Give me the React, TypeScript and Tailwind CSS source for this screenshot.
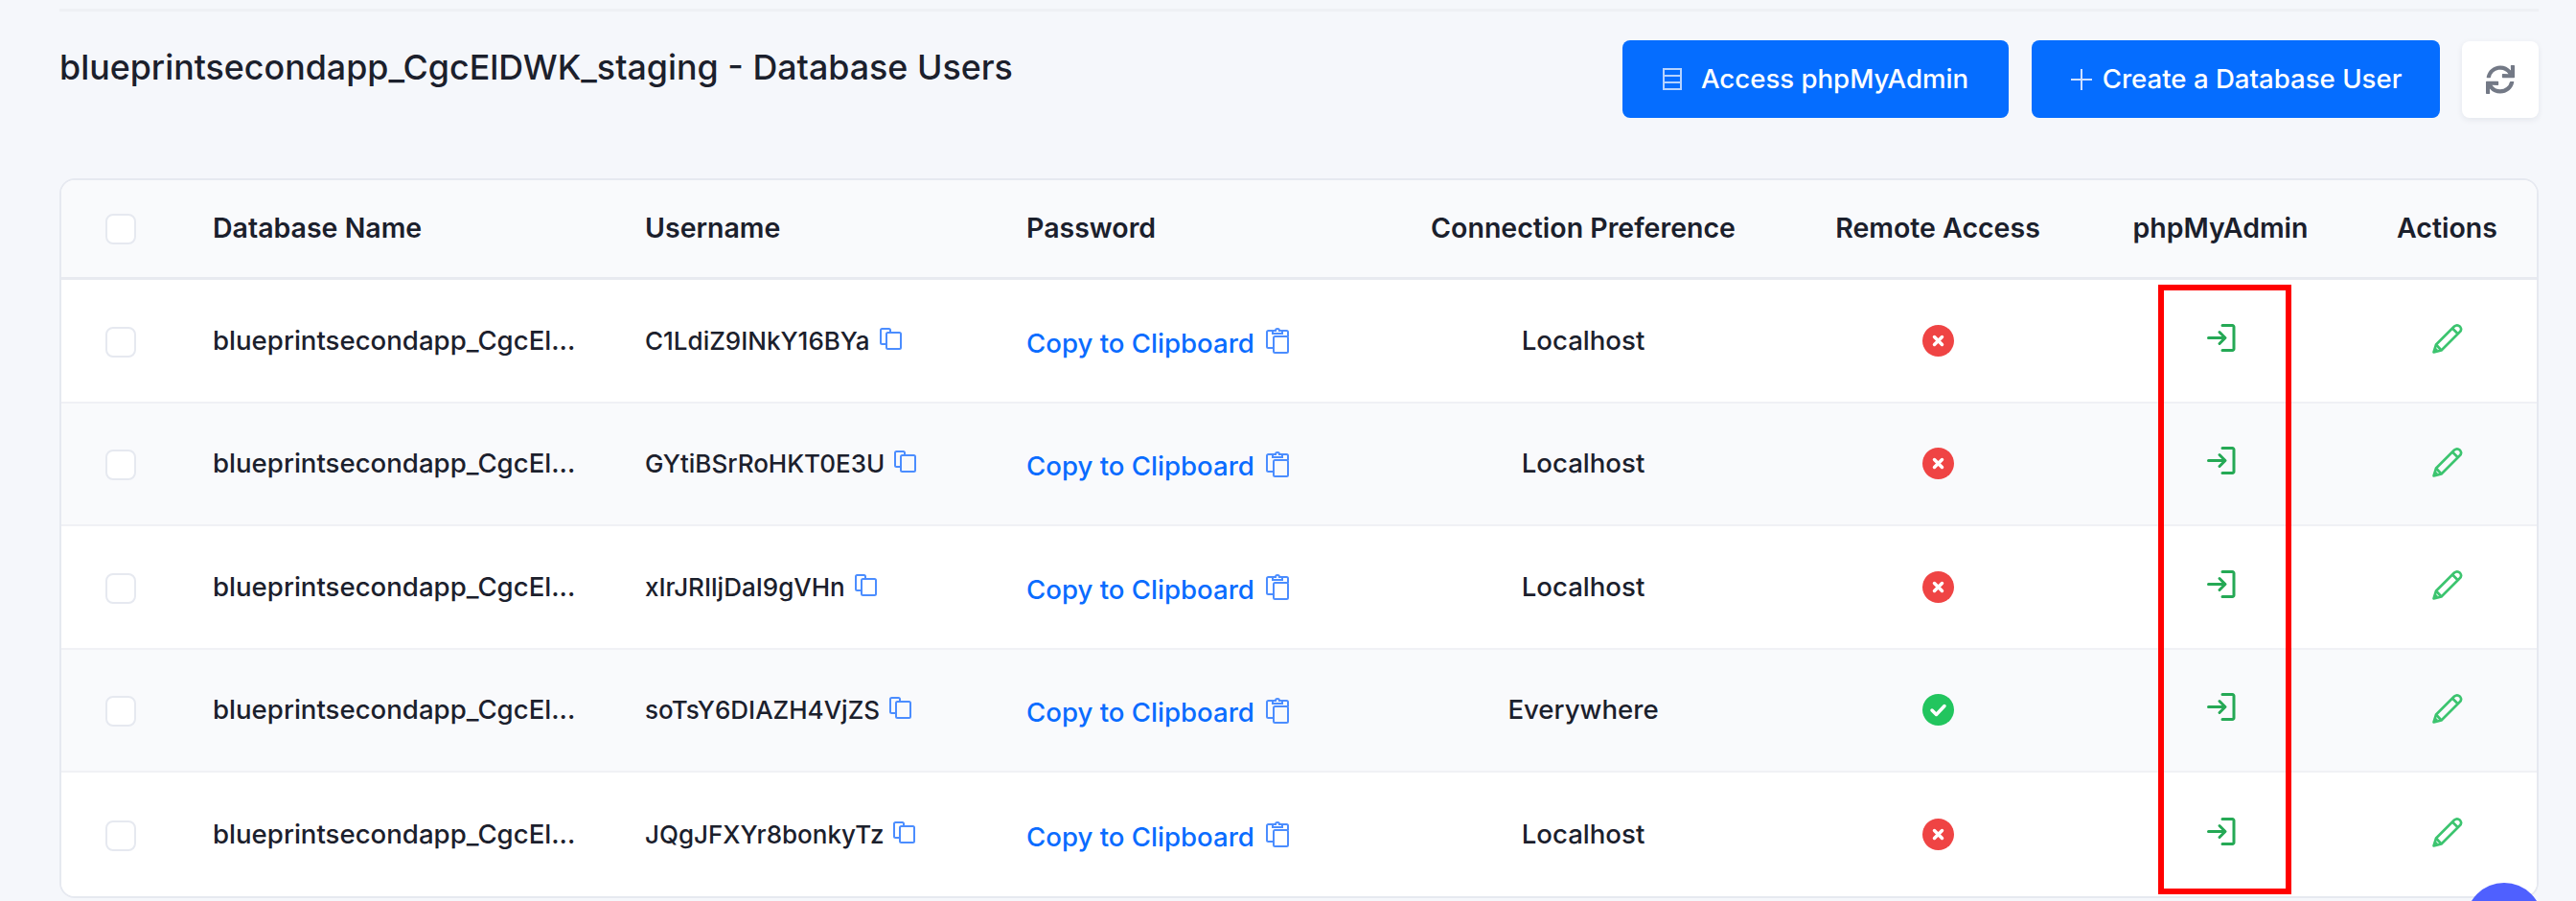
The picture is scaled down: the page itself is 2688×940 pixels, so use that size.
import { FaSync } from "react-icons/fa";

const rows = [
  { user: "C1LdiZ9INkY16BYa", pref: "Localhost", ok: false },
  { user: "GYtiBSrRoHKT0E3U", pref: "Localhost", ok: false },
  { user: "xIrJRIljDaI9gVHn", pref: "Localhost", ok: false },
  { user: "soTsY6DIAZH4VjZS", pref: "Everywhere", ok: true },
  { user: "JQgJFXYr8bonkyTz", pref: "Localhost", ok: false },
];

const grid = "grid grid-cols-[158px_451px_398px_359px_444px_296px_294px_1fr] items-center";

function Checkbox({ body }: { body?: boolean }) {
  return <div className={`ml-[46px] h-[32px] w-[32px] rounded-[8px] border-2 border-[#e6e9f0] bg-white ${body ? "mt-[3px]" : ""}`} />;
}

function CopyIcon() {
  return (
    <svg width="23" height="23" viewBox="0 0 23 23" fill="none" stroke="#4b8dff" strokeWidth="2" className="mb-[4px] shrink-0">
      <path d="M6 17H2.5a1.5 1.5 0 0 1-1.5-1.5v-13A1.5 1.5 0 0 1 2.5 1h7A1.5 1.5 0 0 1 11 2.5V5" />
      <rect x="7" y="5" width="15" height="17" rx="1.5" />
    </svg>
  );
}

function ClipIcon() {
  return (
    <svg width="24" height="28" viewBox="0 0 24 28" fill="none" stroke="#4b8dff" strokeWidth="2" className="mb-[6px] shrink-0">
      <path d="M7 4H2.500A1.500 1.500 0 0 0 1 5.500v15A1.500 1.500 0 0 0 2.500 22H8" />
      <path d="M17 4h4.500A1.500 1.500 0 0 1 23 5.500V10" />
      <path d="M7 7V4h3a2 2 0 0 1 4 0h3v3z" />
      <rect x="8" y="10" width="15" height="17" rx="1.500" />
    </svg>
  );
}

function LoginIcon() {
  return (
    <svg width="30" height="30" viewBox="0 0 30 30" fill="none" stroke="#25a955" strokeWidth="3" strokeLinecap="round" strokeLinejoin="round">
      <path d="M16 1.500h10.500a1.500 1.500 0 0 1 1.500 1.500v23a1.500 1.500 0 0 1-1.500 1.500H16" />
      <path d="M1.500 14.500h17M13 8.500l6 6-6 6" />
    </svg>
  );
}

function PencilIcon() {
  return (
    <svg width="32" height="32" viewBox="0 0 32 32" fill="none" stroke="#3cc46f" strokeWidth="2.600" strokeLinejoin="round">
      <path d="M1.500 30.500L4 22.500L23 3.500Q26 1 29 3.700Q31.500 7 28.500 9.500L9.500 28.500Z" />
      <path d="M21 5.500L27 11.500M4 22.500L9.500 28.500" />
      <path d="M2 30L5 27" strokeWidth="3" />
    </svg>
  );
}

function DbIcon() {
  return (
    <svg width="20" height="23" viewBox="0 0 20 23" fill="none" stroke="#b5d2ff" strokeWidth="2">
      <rect x="1" y="1" width="18" height="21" />
      <path d="M1 8h18M1 15h18" />
    </svg>
  );
}

function StatusIcon({ ok }: { ok: boolean }) {
  return (
    <svg width="33" height="33" viewBox="0 0 33 33">
      <circle cx="16.500" cy="16.500" r="16.500" fill={ok ? "#22c55e" : "#ef4444"} />
      {ok ? (
        <path d="M10 17l4.500 4.500L23 12.500" fill="none" stroke="#fff" strokeWidth="3.500" strokeLinecap="round" strokeLinejoin="round" />
      ) : (
        <path d="M12.500 12.500l8 8M20.500 12.500l-8 8" fill="none" stroke="#fff" strokeWidth="3.500" strokeLinecap="round" />
      )}
    </svg>
  );
}

export default function App() {
  return (
    <div className="relative h-[940px] w-[2688px] overflow-hidden bg-[#f5f7fb] font-['Inter',sans-serif] text-[#1b202c]">
      <div className="pl-[62px] pr-[39px] pt-[9px]">
        <div className="h-[3px] bg-[#eef0f4]" />
        <div className="mt-[30px] flex items-start justify-between">
          <h1 className="mt-[6px] text-[35.800px] font-medium leading-[44px]">blueprintsecondapp_CgcElDWK_staging - Database Users</h1>
          <div className="flex items-center">
            <button className="flex h-[81px] w-[403px] items-center justify-center gap-[20px] rounded-[8px] bg-[#056dff] text-[27.600px] font-medium text-white">
              <DbIcon />
              <span>Access phpMyAdmin</span>
            </button>
            <button className="ml-[24px] flex h-[81px] w-[426px] items-center justify-center gap-[10px] rounded-[8px] bg-[#056dff] text-[27.600px] font-medium text-white">
              <svg width="24" height="24" viewBox="0 0 24 24" fill="none" stroke="#cfe1ff" strokeWidth="2"><path d="M12 1v22M1 12h22" /></svg>
              <span>Create a Database User</span>
            </button>
            <button className="ml-[23px] flex h-[80px] w-[80px] items-center justify-center rounded-[8px] bg-white shadow-[0_2px_6px_rgba(30,40,70,0.08)]">
              <FaSync size={30} color="#737986" />
            </button>
          </div>
        </div>

        <div className="mt-[63px] overflow-hidden rounded-[16px] border-2 border-[#e6e9f0] bg-white">
          <div className={`${grid} h-[104px] border-b-[3px] border-[#e8eaf0] bg-[#f9fafc] text-[28.500px] font-semibold`}>
            <Checkbox />
            <div>Database Name</div>
            <div>Username</div>
            <div>Password</div>
            <div className="text-center">Connection Preference</div>
            <div className="text-center">Remote Access</div>
            <div className="text-center">phpMyAdmin</div>
            <div className="pr-[4px] text-center">Actions</div>
          </div>
          {rows.map((r, i) => (
            <div
              key={r.user}
              className={`${grid} h-[128.500px] ${i < 4 ? "border-b-2 border-[#f0f1f5]" : ""} ${i % 2 === 1 ? "bg-[#f9fafc]" : "bg-white"} text-[27.600px] font-medium`}
            >
              <Checkbox body />
              <div>blueprintsecondapp_CgcEl...</div>
              <div className="flex items-center gap-[10px]">
                <span className="text-[26px]">{r.user}</span>
                <CopyIcon />
              </div>
              <div className="mt-[6px] flex items-center gap-[12px] text-[#0a6cff]">
                <span>Copy to Clipboard</span>
                <ClipIcon />
              </div>
              <div className="text-center">{r.pref}</div>
              <div className="flex justify-center"><StatusIcon ok={r.ok} /></div>
              <div className="mb-[5px] ml-[2px] flex justify-center"><LoginIcon /></div>
              <div className="mb-[4px] flex justify-center pr-[4px]"><PencilIcon /></div>
            </div>
          ))}
        </div>
      </div>

      <div className="absolute left-[2252px] top-[297px] h-[636px] w-[139px] border-[6px] border-[#ff0000]" />
      <div className="absolute left-[2573px] top-[921px] h-[80px] w-[80px] rounded-full bg-[#4f60ff]" />
    </div>
  );
}
